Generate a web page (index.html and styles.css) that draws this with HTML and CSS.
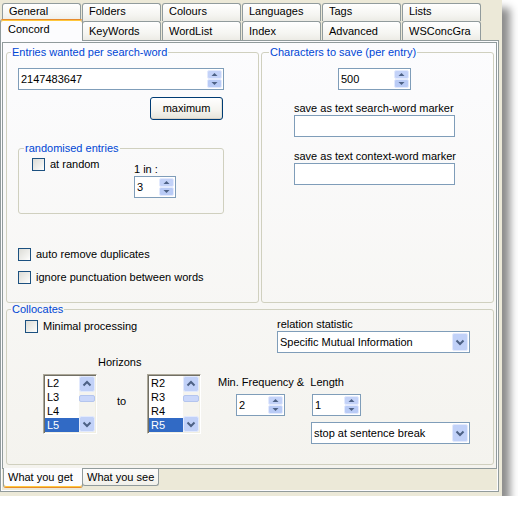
FILE: index.html
```html
<!DOCTYPE html>
<html>
<head>
<meta charset="utf-8">
<title>Concord settings</title>
<link rel="stylesheet" href="styles.css">
</head>
<body>
<div class="window">
  <div class="tabstrip">
    <div class="tabrow back">
      <div class="tab">General</div>
      <div class="tab">Folders</div>
      <div class="tab">Colours</div>
      <div class="tab">Languages</div>
      <div class="tab">Tags</div>
      <div class="tab">Lists</div>
    </div>
    <div class="tabrow front">
      <div class="tab sel">Concord</div>
      <div class="tab">KeyWords</div>
      <div class="tab">WordList</div>
      <div class="tab">Index</div>
      <div class="tab">Advanced</div>
      <div class="tab">WSConcGra</div>
    </div>
  </div>
  <div class="outerpage">
    <div class="innerctl">
      <div class="innerpage">
        <fieldset class="grp g-entries">
          <legend>Entries wanted per search-word</legend>
          <div class="spin w206 e-spin"><span class="val">2147483647</span><svg class="spinbtn" width="15" height="18" viewBox="0 0 15 18"><rect x="0.5" y="0.5" width="14" height="8" rx="1.5" fill="#c3d2f8" stroke="#e3eafd"/><rect x="0.5" y="9.5" width="14" height="8" rx="1.5" fill="#b9cbf6" stroke="#e3eafd"/><path d="M4.5 6 L7.5 3 L10.5 6 Z" fill="#4d6185"/><path d="M4.5 12 L7.5 15 L10.5 12 Z" fill="#4d6185"/></svg></div>
          <div class="btn maxbtn">maximum</div>
          <fieldset class="grp g-rand">
            <legend>randomised entries</legend>
            <div class="randrow">
              <label class="chk atrandom"><span class="box"></span><span>at random</span></label>
              <div class="onein">
                <div class="lbl">1 in :</div>
                <div class="spin w42"><span class="val">3</span><svg class="spinbtn" width="15" height="18" viewBox="0 0 15 18"><rect x="0.5" y="0.5" width="14" height="8" rx="1.5" fill="#c3d2f8" stroke="#e3eafd"/><rect x="0.5" y="9.5" width="14" height="8" rx="1.5" fill="#b9cbf6" stroke="#e3eafd"/><path d="M4.5 6 L7.5 3 L10.5 6 Z" fill="#4d6185"/><path d="M4.5 12 L7.5 15 L10.5 12 Z" fill="#4d6185"/></svg></div>
              </div>
            </div>
          </fieldset>
          <label class="chk dup"><span class="box"></span><span>auto remove duplicates</span></label>
          <label class="chk punct"><span class="box"></span><span>ignore punctuation between words</span></label>
        </fieldset>

        <fieldset class="grp g-chars">
          <legend>Characters to save (per entry)</legend>
          <div class="spin w73 c-spin"><span class="val">500</span><svg class="spinbtn" width="15" height="18" viewBox="0 0 15 18"><rect x="0.5" y="0.5" width="14" height="8" rx="1.5" fill="#c3d2f8" stroke="#e3eafd"/><rect x="0.5" y="9.5" width="14" height="8" rx="1.5" fill="#b9cbf6" stroke="#e3eafd"/><path d="M4.5 6 L7.5 3 L10.5 6 Z" fill="#4d6185"/><path d="M4.5 12 L7.5 15 L10.5 12 Z" fill="#4d6185"/></svg></div>
          <div class="lbl c-lbl1">save as text search-word marker</div>
          <div class="edit w161 c-edit"></div>
          <div class="lbl c-lbl2">save as text context-word marker</div>
          <div class="edit w161 c-edit"></div>
        </fieldset>

        <fieldset class="grp g-colloc">
          <legend>Collocates</legend>
          <div class="crow1">
            <label class="chk minproc"><span class="box"></span><span>Minimal processing</span></label>
            <div class="relcol">
              <div class="lbl">relation statistic</div>
              <div class="combo w193"><span class="val">Specific Mutual Information</span><svg class="dropbtn" width="16" height="18" viewBox="0 0 16 18"><rect x="0.5" y="0.5" width="15" height="17" rx="1.5" fill="#c1d1f8" stroke="#e3eafd"/><path d="M4.5 7.5 L8 11 L11.5 7.5" fill="none" stroke="#4d6185" stroke-width="2"/></svg></div>
            </div>
          </div>
          <div class="crow2">
            <div class="horcol">
              <div class="lbl horlbl">Horizons</div>
              <div class="lists">
                <div class="list">
                  <div class="items">
                    <div class="it">L2</div>
                    <div class="it">L3</div>
                    <div class="it">L4</div>
                    <div class="it on">L5</div>
                  </div>
                  <div class="vscroll">
                    <svg width="16" height="16" viewBox="0 0 16 16"><rect x="0.5" y="0.5" width="15" height="15" rx="2" fill="#c1d1f8" stroke="#e3eafd"/><path d="M4.5 9.5 L8 6 L11.5 9.5" fill="none" stroke="#4d6185" stroke-width="2"/></svg>
                    <div class="track"><div class="thumb"></div></div>
                    <svg width="16" height="16" viewBox="0 0 16 16"><rect x="0.5" y="0.5" width="15" height="15" rx="2" fill="#c1d1f8" stroke="#e3eafd"/><path d="M4.5 6.5 L8 10 L11.5 6.5" fill="none" stroke="#4d6185" stroke-width="2"/></svg>
                  </div>
                </div>
                <div class="to">to</div>
                <div class="list">
                  <div class="items">
                    <div class="it">R2</div>
                    <div class="it">R3</div>
                    <div class="it">R4</div>
                    <div class="it on">R5</div>
                  </div>
                  <div class="vscroll">
                    <svg width="16" height="16" viewBox="0 0 16 16"><rect x="0.5" y="0.5" width="15" height="15" rx="2" fill="#c1d1f8" stroke="#e3eafd"/><path d="M4.5 9.5 L8 6 L11.5 9.5" fill="none" stroke="#4d6185" stroke-width="2"/></svg>
                    <div class="track"><div class="thumb"></div></div>
                    <svg width="16" height="16" viewBox="0 0 16 16"><rect x="0.5" y="0.5" width="15" height="15" rx="2" fill="#c1d1f8" stroke="#e3eafd"/><path d="M4.5 6.5 L8 10 L11.5 6.5" fill="none" stroke="#4d6185" stroke-width="2"/></svg>
                  </div>
                </div>
              </div>
            </div>
            <div class="freqcol">
              <div class="lbl freqlbl">Min. Frequency &amp;&nbsp; Length</div>
              <div class="spins">
                <div class="spin w49 sp-freq"><span class="val">2</span><svg class="spinbtn" width="15" height="18" viewBox="0 0 15 18"><rect x="0.5" y="0.5" width="14" height="8" rx="1.5" fill="#c3d2f8" stroke="#e3eafd"/><rect x="0.5" y="9.5" width="14" height="8" rx="1.5" fill="#b9cbf6" stroke="#e3eafd"/><path d="M4.5 6 L7.5 3 L10.5 6 Z" fill="#4d6185"/><path d="M4.5 12 L7.5 15 L10.5 12 Z" fill="#4d6185"/></svg></div>
                <div class="spin w49 sp-len"><span class="val">1</span><svg class="spinbtn" width="15" height="18" viewBox="0 0 15 18"><rect x="0.5" y="0.5" width="14" height="8" rx="1.5" fill="#c3d2f8" stroke="#e3eafd"/><rect x="0.5" y="9.5" width="14" height="8" rx="1.5" fill="#b9cbf6" stroke="#e3eafd"/><path d="M4.5 6 L7.5 3 L10.5 6 Z" fill="#4d6185"/><path d="M4.5 12 L7.5 15 L10.5 12 Z" fill="#4d6185"/></svg></div>
              </div>
              <div class="combo w159 stop"><span class="val">stop at sentence break</span><svg class="dropbtn" width="16" height="18" viewBox="0 0 16 18"><rect x="0.5" y="0.5" width="15" height="17" rx="1.5" fill="#c1d1f8" stroke="#e3eafd"/><path d="M4.5 7.5 L8 11 L11.5 7.5" fill="none" stroke="#4d6185" stroke-width="2"/></svg></div>
            </div>
          </div>
        </fieldset>
      </div>
      <div class="btabs">
        <div class="btab sel">What you get</div>
        <div class="btab unsel">What you see</div>
      </div>
    </div>
  </div>
</div>
</body>
</html>
```
FILE: styles.css
```css
* { box-sizing: border-box; }

body {
  margin: 0;
  background: #ffffff;
  font-family: "Liberation Sans", Arial, sans-serif;
  font-size: 11px;
  line-height: 13px;
  color: #000;
}

.window {
  width: 502px;
  height: 496px;
  background: #ece9d8;
  box-shadow: 8px 8px 8px rgba(0, 0, 0, 0.45);
}

/* top tab strip */
.tabstrip {
  height: 40px;
  padding-top: 3px;
}
.tabrow {
  display: flex;
  align-items: flex-start;
  gap: 1px;
  padding-left: 2px;
}
.tab {
  width: 79px;
  border: 1px solid #919b9c;
  border-bottom: 0;
  border-radius: 3px 3px 0 0;
  background: linear-gradient(#ffffff, #f5f5f1 65%, #ecebe5);
  padding-left: 6px;
  white-space: nowrap;
  overflow: hidden;
}
.back .tab {
  height: 18px;
  padding-top: 1px;
}
.front .tab {
  height: 19px;
  padding-top: 3px;
}
.front .tab.sel {
  width: 83px;
  height: 22px;
  margin: -2px -2px 0;
  padding-top: 3px;
  padding-left: 7px;
  background: #fcfcfe;
  border-top: 1px solid #e68b2c;
  box-shadow: inset 0 1px #ffc73c;
  position: relative;
  z-index: 2;
}

/* outer tab page */
.outerpage {
  width: 499px;
  height: 452px;
  border: 1px solid #919b9c;
  background: #fcfcfe;
  padding: 1px;
}
.innerctl {
  height: 100%;
  background: #ece9d8;
}
.innerpage {
  height: 427px;
  border: 1px solid #919b9c;
  background: linear-gradient(#fcfcfe, #f4f3ee);
  padding: 3px 2px 3px 3px;
  display: grid;
  grid-template-columns: 253px 233px;
  grid-template-rows: 257px 162px;
  column-gap: 2px;
}

/* group boxes */
.grp {
  margin: 0;
  padding: 0;
  min-width: 0;
  border: 1px solid #d0d0bf;
  border-radius: 3px;
}
.grp > legend {
  margin-left: 4px;
  padding: 0 1px;
  color: #0046d5;
  line-height: 13px;
}
.g-chars > legend { margin-left: 7px; }
.g-rand > legend { margin-left: 5px; }
.g-colloc { grid-column: 1 / 3; }

.lbl { line-height: 13px; white-space: nowrap; }

/* edit controls */
.spin, .combo {
  display: flex;
  align-items: center;
  height: 22px;
  border: 1px solid #7f9db9;
  background: #fff;
  padding-left: 2px;
}
.spin .val, .combo .val { flex: 1; white-space: nowrap; overflow: hidden; }
.spinbtn { margin-right: 1px; flex: none; }
.dropbtn { margin-right: 1px; flex: none; }
.edit {
  height: 22px;
  border: 1px solid #7f9db9;
  background: #fff;
}
.w206 { width: 206px; }
.w73 { width: 73px; }
.w42 { width: 42px; }
.w49 { width: 49px; }
.w161 { width: 161px; }
.w193 { width: 193px; }
.w159 { width: 159px; }

.btn {
  width: 73px;
  height: 23px;
  border: 1px solid #003c74;
  border-radius: 3px;
  background: linear-gradient(#ffffff, #f4f3ee 60%, #e6e4da);
  box-shadow: inset 0 -1px #d6d0c5, inset -1px 0 #e3e1d6;
  display: flex;
  align-items: center;
  justify-content: center;
}

/* checkboxes */
.chk {
  display: flex;
  align-items: center;
  gap: 5px;
  height: 13px;
  white-space: nowrap;
}
.box {
  width: 13px;
  height: 13px;
  flex: none;
  border: 1px solid #1c5180;
  background: linear-gradient(135deg, #dcdcd6 0%, #f3f3f0 70%, #ffffff 100%);
}

/* left group */
.e-spin { margin: 9px 0 0 11px; }
.maxbtn { margin: 7px 0 0 143px; }
.g-rand {
  margin: 22px 0 0 11px;
  width: 206px;
  height: 72px;
}
.randrow { display: flex; align-items: flex-start; }
.atrandom { width: 102px; margin: 3px 0 0 13px; }
.onein { margin-top: 8px; }
.dup { margin: 34px 0 0 11px; }
.punct { margin: 10px 0 0 11px; }

/* right group */
.c-spin { margin: 9px 0 0 76px; }
.c-lbl1 { margin: 12px 0 0 32px; }
.c-lbl2 { margin: 13px 0 0 32px; }
.c-edit { margin-left: 32px; }

/* collocates */
.crow1 {
  display: flex;
  align-items: flex-start;
  padding-top: 2px;
}
.minproc { margin: 2px 0 0 18px; }
.relcol { margin: 0 23px 0 auto; }
.crow2 { display: flex; align-items: flex-start; }
.horcol { margin-left: 36px; }
.horlbl { margin: 3px 0 0 55px; }
.lists { display: flex; align-items: flex-start; margin-top: 5px; }
.to { width: 10px; margin: 21px 20px 0; }
.freqcol { margin-left: 17px; }
.freqlbl { margin-top: 23px; }
.spins { display: flex; margin-top: 5px; }
.sp-freq { margin-left: 18px; }
.sp-len { margin-left: 27px; }
.stop { margin: 6px 0 0 93px; }

/* list boxes */
.list {
  width: 54px;
  height: 60px;
  display: flex;
  padding: 1px;
  border: 1px solid;
  border-color: #aca899 #ffffff #ffffff #aca899;
  box-shadow: inset 1px 1px #716f64, inset -1px -1px #f1efe2;
  background: #fff;
}
.items { width: 34px; }
.it {
  height: 14px;
  line-height: 14px;
  padding-left: 2px;
}
.it.on { background: #316ac5; color: #fff; }
.vscroll {
  width: 16px;
  display: flex;
  flex-direction: column;
  background: #f5f4ef;
}
.vscroll svg { display: block; flex: none; }
.track { flex: 1; padding-top: 3px; }
.thumb {
  height: 7px;
  border: 1px solid #b4c5ee;
  border-radius: 2px;
  background: #cad7fa;
}

/* bottom tabs */
.btabs {
  display: flex;
  align-items: flex-start;
  height: 21px;
  padding-left: 1px;
}
.btab {
  height: 17px;
  border: 1px solid #919b9c;
  border-top: 0;
  border-radius: 0 0 3px 3px;
  background: linear-gradient(#fdfdfc, #f1f0ea);
  padding: 2px 4px 0;
  white-space: nowrap;
}
.btab.sel {
  width: 80px;
  height: 20px;
  margin-top: -1px;
  padding-top: 3px;
  background: #fcfcfe;
  border-bottom: 1px solid #e68b2c;
  box-shadow: inset 0 -1px #ffc73c;
  position: relative;
  z-index: 2;
}
.btab.unsel {
  width: 77px;
  margin-left: -1px;
}
```
